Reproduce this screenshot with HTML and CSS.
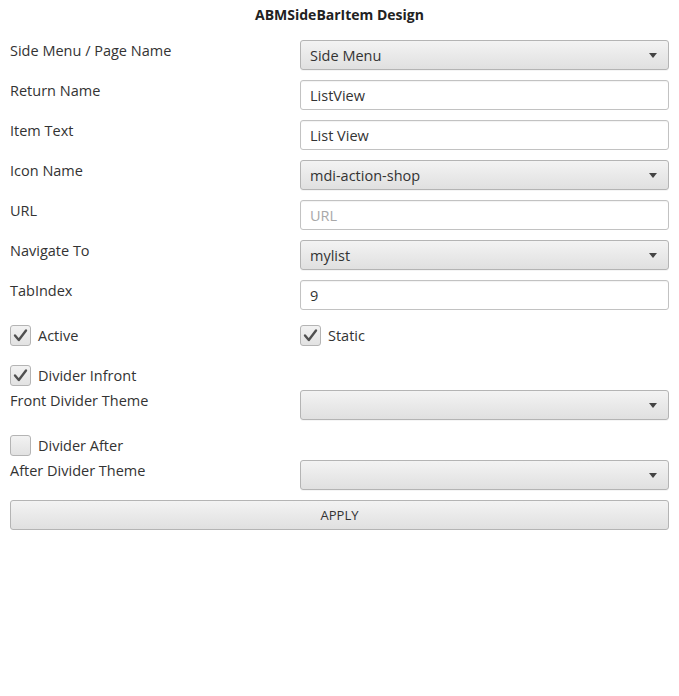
FILE: index.html
```html
<!DOCTYPE html>
<html>
<head>
<meta charset="utf-8">
<link rel="stylesheet" href="styles.css">
</head>
<body>
<div class="page">
  <div class="title">ABMSideBarItem Design</div>
  <div class="form">
    <div class="row">
      <div class="label">Side Menu / Page Name</div>
      <div class="select"><span class="value">Side Menu</span><span class="arrow"></span></div>
    </div>
    <div class="row">
      <div class="label">Return Name</div>
      <div class="input">ListView</div>
    </div>
    <div class="row">
      <div class="label">Item Text</div>
      <div class="input">List View</div>
    </div>
    <div class="row">
      <div class="label">Icon Name</div>
      <div class="select"><span class="value">mdi-action-shop</span><span class="arrow"></span></div>
    </div>
    <div class="row">
      <div class="label">URL</div>
      <div class="input placeholder">URL</div>
    </div>
    <div class="row">
      <div class="label">Navigate To</div>
      <div class="select"><span class="value">mylist</span><span class="arrow"></span></div>
    </div>
    <div class="row">
      <div class="label">TabIndex</div>
      <div class="input">9</div>
    </div>
    <div class="row checks">
      <div class="check"><span class="box"><svg class="tick" viewBox="0 0 21 21"><path d="M5 10.5 L8.8 15 L16 5.5"/></svg></span><span class="ctext">Active</span></div>
      <div class="check"><span class="box"><svg class="tick" viewBox="0 0 21 21"><path d="M5 10.5 L8.8 15 L16 5.5"/></svg></span><span class="ctext">Static</span></div>
    </div>
    <div class="group">
      <div class="row checks">
        <div class="check"><span class="box"><svg class="tick" viewBox="0 0 21 21"><path d="M5 10.5 L8.8 15 L16 5.5"/></svg></span><span class="ctext">Divider Infront</span></div>
      </div>
      <div class="row">
        <div class="label">Front Divider Theme</div>
        <div class="select"><span class="value"></span><span class="arrow"></span></div>
      </div>
    </div>
    <div class="group">
      <div class="row checks">
        <div class="check"><span class="box"></span><span class="ctext">Divider After</span></div>
      </div>
      <div class="row">
        <div class="label">After Divider Theme</div>
        <div class="select"><span class="value"></span><span class="arrow"></span></div>
      </div>
    </div>
    <div class="button">APPLY</div>
  </div>
</div>
</body>
</html>
```

FILE: styles.css
```css
html, body {
  margin: 0;
  padding: 0;
  background: #ffffff;
}
body {
  font-family: "Open Sans", "Noto Sans", sans-serif;
  color: #333333;
  width: 679px;
  height: 696px;
  overflow: hidden;
}
.page {
  padding: 0 10px;
}
.title {
  height: 30px;
  line-height: 30px;
  text-align: center;
  font-weight: bold;
  font-size: 14px;
  color: #222;
}
.form {
  display: flex;
  flex-direction: column;
  gap: 10px;
  padding-top: 10px;
}
.group {
  display: flex;
  flex-direction: column;
}
.row {
  display: grid;
  grid-template-columns: 290px 369px;
  height: 30px;
}
.label {
  font-size: 14.5px;
  line-height: 20px;
  padding-top: 1px;
}
.select, .input, .button {
  box-sizing: border-box;
  height: 30px;
  border-radius: 3px;
  font-size: 14.5px;
  display: flex;
  align-items: center;
  padding: 0 9px;
}
.select {
  border: 1px solid #b4b4b4;
  background: linear-gradient(#f3f3f3, #e0e0e0);
  justify-content: space-between;
  box-shadow: 0 1px 0 rgba(0,0,0,0.04);
}
.value {
  padding-top: 1px;
}
.arrow {
  width: 0;
  height: 0;
  border-left: 4px solid transparent;
  border-right: 4px solid transparent;
  border-top: 5px solid #444;
  margin-right: 2px;
}
.input {
  border: 1px solid #c2c2c2;
  background: #ffffff;
  box-shadow: inset 0 1px 1px rgba(0,0,0,0.05);
}
.placeholder {
  color: #a8a8a8;
}
.checks .check {
  display: flex;
  align-items: center;
  gap: 7px;
  font-size: 14.5px;
}
.box {
  box-sizing: border-box;
  width: 21px;
  height: 21px;
  border: 1px solid #b4b4b4;
  border-radius: 3px;
  background: linear-gradient(#f2f2f2, #e2e2e2);
  position: relative;
}
.tick {
  position: absolute;
  left: -1px;
  top: -1px;
  width: 21px;
  height: 21px;
  fill: none;
  stroke: #505050;
  stroke-width: 2.4;
  stroke-linecap: round;
  stroke-linejoin: round;
}
.button {
  border: 1px solid #b4b4b4;
  background: linear-gradient(#f3f3f3, #e0e0e0);
  justify-content: center;
  height: 30px;
  font-size: 13px;
}
```
